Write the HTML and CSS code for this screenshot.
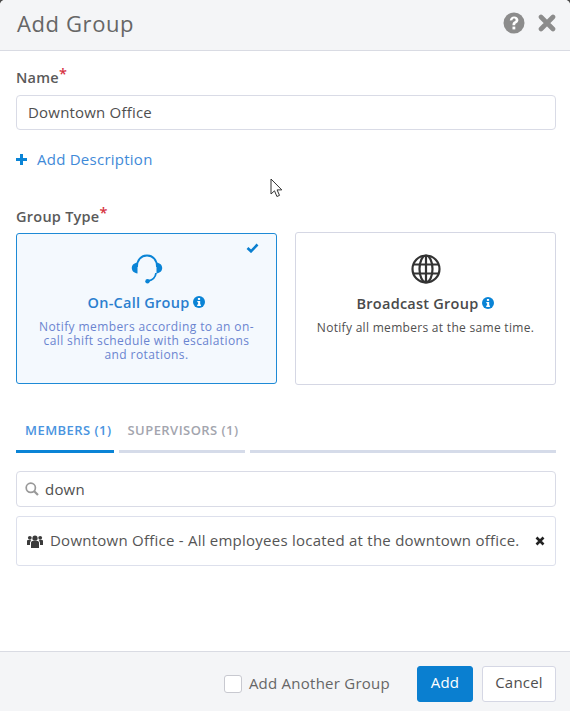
FILE: index.html
```html
<!DOCTYPE html>
<html lang="en">
<head>
    <meta charset="UTF-8">
    <title>Add Group</title>
    <link rel="stylesheet" href="styles.css">
</head>
<body>
<div class="modal">
    <header class="modal-header">
        <h1>Add Group</h1>
        <div class="header-icons">
            <svg class="help-icon" viewBox="0 0 22 22" width="22" height="22">
                <circle cx="11" cy="11" r="10.5" fill="#8c8c8c"/>
                <path d="M6.800 8.400C7.200 5.600 8.800 4.400 11.100 4.400c2.500 0 4.300 1.500 4.300 3.600 0 1.700-1 2.500-2.100 3.200-.8.500-1.100.9-1.100 1.700v.4H9.500v-.8c0-1.500.7-2.200 1.700-2.900.9-.6 1.400-1 1.400-1.700 0-.8-.7-1.300-1.500-1.300-1 0-1.500.6-1.700 1.600z" fill="#fff"/>
                <rect x="9.500" y="14.600" width="2.800" height="2.800" fill="#fff"/>
            </svg>
            <svg class="close-icon" viewBox="0 0 18 18" width="18" height="18">
                <path d="M3 3l12 12M15 3L3 15" stroke="#8c8c8c" stroke-width="4.600" stroke-linecap="round"/>
            </svg>
        </div>
    </header>

    <main class="modal-body">
        <label class="field-label">Name<span class="required">*</span></label>
        <div class="text-box name-box">Downtown Office</div>

        <a class="add-link">
            <svg viewBox="0 0 11 11" width="11" height="11"><path d="M5.500 0v11M0 5.500h11" stroke="#0a84d6" stroke-width="3"/></svg>
            <span>Add Description</span>
        </a>

        <label class="field-label type-label">Group Type<span class="required">*</span></label>
        <div class="type-cards">
            <div class="type-card selected">
                <svg class="check-icon" viewBox="0 0 13 10" width="13" height="10"><path d="M1.500 5l3.500 3.300L11.500 1.500" fill="none" stroke="#0a7fd0" stroke-width="2.600"/></svg>
                <svg class="type-icon" viewBox="0 0 32 30" width="32" height="30">
                    <path d="M6 13C6 6 10 1.500 16 1.500S26 6 26 13M25 19c-.5 4.500-3 7-8 8" fill="none" stroke="#0a84d6" stroke-width="1.800"/>
                    <path d="M6.500 8.500v11C3 19 .8 17 .8 14S3 9 6.500 8.500zM25.500 8.500v11c3.500-.5 5.700-2.500 5.700-5.500s-2.200-5-5.700-5.500z" fill="#0a84d6"/>
                    <circle cx="16.500" cy="27.300" r="2.200" fill="#0a84d6"/>
                </svg>
                <h2>On-Call Group <svg class="info-icon" viewBox="0 0 12 12" width="12" height="12"><use href="#info"/></svg></h2>
                <p>Notify members according to an on-call shift schedule with escalations and rotations.</p>
            </div>
            <div class="type-card">
                <svg class="type-icon" viewBox="0 0 30 30" width="30" height="30" fill="none" stroke="#333" stroke-width="2.200">
                    <circle cx="15" cy="15" r="13.500"/>
                    <ellipse cx="15" cy="15" rx="6.500" ry="13.500"/>
                    <path d="M15 1.500v27M2.500 10.500h25M2.500 19.500h25"/>
                </svg>
                <h2>Broadcast Group <svg class="info-icon" viewBox="0 0 12 12" width="12" height="12"><use href="#info"/></svg></h2>
                <p>Notify all members at the same time.</p>
            </div>
        </div>

        <nav class="tabs">
            <a class="tab active">MEMBERS (1)</a>
            <a class="tab">SUPERVISORS (1)</a>
            <span class="tab-rest"></span>
        </nav>

        <div class="text-box search-box">
            <svg viewBox="0 0 14 14" width="14" height="14" fill="none" stroke="#999" stroke-width="1.700">
                <circle cx="5.800" cy="5.800" r="4.600"/>
                <path d="M9.200 9.200l3.800 3.800" stroke-width="2.200"/>
            </svg>
            <span>down</span>
        </div>

        <div class="result-item">
            <svg class="people-icon" viewBox="0 0 16 13" width="16" height="13" fill="#3a3a3a">
                <circle cx="8" cy="3.200" r="2.600"/>
                <circle cx="2.800" cy="2.800" r="1.900"/>
                <circle cx="13.200" cy="2.800" r="1.900"/>
                <path d="M4 7.500C4 6.500 5 6 6 6h4c1 0 2 .5 2 1.500V13H4z"/>
                <path d="M0 5.800C0 5.200.6 5 1.200 5h2.300c.2.500.4.800.7.900C3.300 6.300 3 7 3 8v2H0zM16 5.800c0-.6-.6-.8-1.200-.8h-2.300c-.2.500-.4.800-.7.900.9.400 1.200 1.100 1.200 2.100v2h3z"/>
            </svg>
            <span class="result-text">Downtown Office - All employees located at the downtown office.</span>
            <svg class="remove-icon" viewBox="0 0 10 10" width="10" height="10"><path d="M1.500 1.500l7 7M8.500 1.500l-7 7" stroke="#222" stroke-width="2.600"/></svg>
        </div>
    </main>

    <footer class="modal-footer">
        <label class="another">
            <span class="checkbox"></span>
            <span class="another-text">Add Another Group</span>
        </label>
        <button class="btn btn-primary">Add</button>
        <button class="btn">Cancel</button>
    </footer>
</div>

<svg class="cursor" viewBox="0 0 13 20" width="13" height="20">
    <path d="M1 1v15l3.500-3.200 2.400 5.700 2.600-1.100-2.400-5.500h4.700z" fill="#fff" stroke="#333" stroke-width="1"/>
</svg>

<svg class="defs" width="0" height="0">
    <symbol id="info" viewBox="0 0 12 12">
        <circle cx="6" cy="6" r="6" fill="#0a84d6"/>
        <rect x="4.900" y="2" width="2.200" height="1.900" fill="#fff"/>
        <path d="M4.300 4.900h2.900v3.700h.7V10H4.200V8.600h.9V6.300h-.8z" fill="#fff"/>
    </symbol>
</svg>
</body>
</html>
```

FILE: styles.css
```css
* {
    box-sizing: border-box;
}

html {
    background-color: #4a4a4a;
}

body {
    margin: 0;
    width: 570px;
    height: 711px;
    overflow: hidden;
    font-family: "Open Sans", "Liberation Sans", sans-serif;
    color: #4a4a4a;
}

.modal {
    display: flex;
    flex-direction: column;
    height: 711px;
    background-color: #fff;
    border-radius: 5px 5px 0 0;
}

.modal-header {
    display: flex;
    align-items: center;
    justify-content: space-between;
    height: 51px;
    padding: 0 14px 5px 17px;
    background-color: #f4f5f7;
    border-bottom: 1px solid #d9dbe3;
    border-radius: 5px 5px 0 0;
}

.modal-header h1 {
    margin: 0;
    font-size: 22px;
    font-weight: 400;
    letter-spacing: 0.6px;
    color: #666;
}

.header-icons {
    display: flex;
    align-items: center;
    gap: 13px;
}

.modal-body {
    flex-grow: 1;
    padding: 0 14px 0 16px;
}

.field-label {
    display: block;
    margin-top: 17px;
    height: 20px;
    font-size: 14.500px;
    font-weight: 600;
    letter-spacing: 0.25px;
    line-height: 20px;
    color: #5a5a5a;
}

.required {
    position: relative;
    top: -4px;
    color: #d6323f;
}

.text-box {
    display: flex;
    align-items: center;
    background-color: #fff;
    border: 1px solid #d9dbe6;
    border-radius: 4px;
    font-size: 15px;
    letter-spacing: 0.2px;
    color: #4f4f4f;
}

.name-box {
    height: 35px;
    margin-top: 7px;
    padding: 0 0 2px 11px;
}

.add-link {
    display: flex;
    align-items: center;
    gap: 10px;
    margin-top: 20px;
    height: 18px;
    font-size: 15px;
    letter-spacing: 0.25px;
    color: #3f8ad8;
}

.type-label {
    margin-top: 39px;
}

.type-cards {
    display: flex;
    justify-content: space-between;
    margin-top: 5px;
}

.type-card {
    position: relative;
    width: 261px;
    height: 153px;
    padding: 21px 16px 0;
    text-align: center;
    border: 1px solid #d5d7e4;
    border-radius: 3px;
}

.type-card.selected {
    height: 151px;
    margin-top: 1px;
    padding-top: 20px;
    background-color: #f4f9fe;
    border-color: #1e8ad6;
}

.check-icon {
    position: absolute;
    top: 9px;
    right: 17px;
}

.type-icon {
    display: block;
    margin: 0 auto;
}

.type-card h2 {
    display: flex;
    align-items: center;
    justify-content: center;
    gap: 4px;
    margin: 9px 0 0;
    height: 20px;
    font-size: 14.500px;
    font-weight: 600;
    letter-spacing: 0.25px;
    color: #4a4a4a;
}

.type-card.selected h2 {
    margin-top: 8px;
    color: #2b7fcf;
}

.type-card p {
    margin: 8px 0 0;
    font-size: 12px;
    line-height: 14px;
    letter-spacing: 0.3px;
    color: #4f4f4f;
}

.type-card.selected p {
    letter-spacing: 0.4px;
    color: #6a84d0;
}

.tabs {
    display: flex;
    gap: 5px;
    margin-top: 33px;
}

.tab {
    height: 35px;
    padding: 3px 6px 0 9px;
    font-size: 13px;
    font-weight: 600;
    letter-spacing: 0.45px;
    line-height: 18px;
    color: #a3a5ae;
    border-bottom: 3px solid #d5dbe9;
}

.tab.active {
    padding-right: 2px;
    color: #4a94e0;
    border-bottom-color: #0a84d6;
}

.tab-rest {
    flex-grow: 1;
    border-bottom: 3px solid #d5dbe9;
}

.search-box {
    gap: 6px;
    height: 36px;
    margin-top: 18px;
    padding-left: 8px;
}

.result-item {
    display: flex;
    align-items: center;
    height: 50px;
    margin-top: 9px;
    padding: 0 10px;
    border: 1px solid #dde0ec;
    border-radius: 3px;
    font-size: 15px;
    letter-spacing: 0.24px;
    color: #555;
}

.people-icon {
    margin-right: 7px;
}

.result-text {
    flex-grow: 1;
    padding-bottom: 2px;
    white-space: nowrap;
}

.modal-footer {
    display: flex;
    align-items: center;
    justify-content: flex-end;
    gap: 9px;
    height: 60px;
    padding: 4px 14px 0 0;
    background-color: #f4f5f7;
    border-top: 1px solid #d9dbe3;
}

.another {
    display: flex;
    align-items: center;
    gap: 7px;
    margin-right: 18px;
    font-size: 15px;
    letter-spacing: 0.25px;
    color: #666;
}

.another-text {
    padding-bottom: 2px;
}

.checkbox {
    width: 18px;
    height: 18px;
    background-color: #fff;
    border: 1px solid #c8c9d0;
    border-radius: 3px;
}

.btn {
    width: 74px;
    height: 36px;
    padding: 0 0 3px;
    background-color: #fff;
    border: 1px solid #d5d7e4;
    border-radius: 3px;
    font-family: inherit;
    font-size: 15px;
    letter-spacing: 0.2px;
    color: #4f4f4f;
}

.btn-primary {
    width: 56px;
    background-color: #0a7fd0;
    border-color: #0a7fd0;
    color: #fff;
}

.cursor {
    position: absolute;
    top: 178px;
    left: 270px;
}

.defs {
    position: absolute;
}
```
